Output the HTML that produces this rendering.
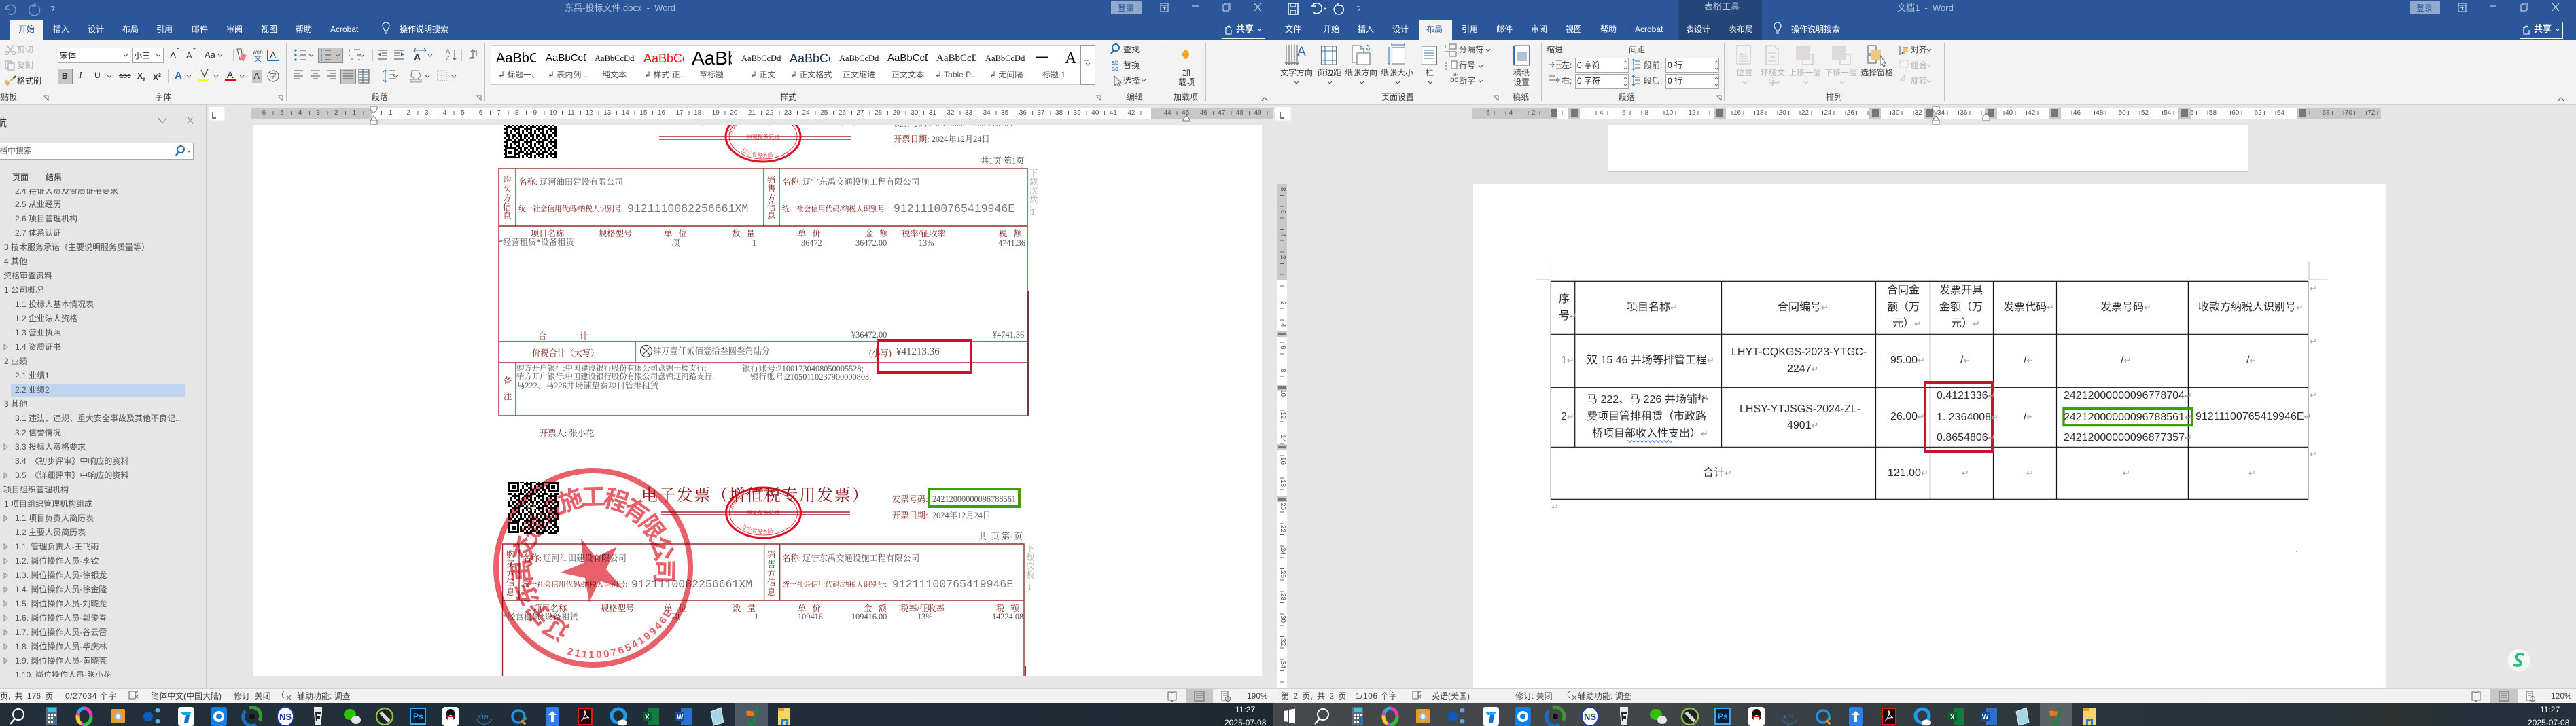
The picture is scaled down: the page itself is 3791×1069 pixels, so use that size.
<!DOCTYPE html>
<html lang="zh"><head><meta charset="utf-8"><title>Word</title>
<style>
html,body{margin:0;padding:0;width:3791px;height:1069px;overflow:hidden;background:#e6e6e6}
body{position:relative;font-family:"Liberation Sans","Noto Sans CJK SC",sans-serif}
p{position:absolute;margin:0;white-space:nowrap;font-size:12px;line-height:14px;color:#444}
i{font-style:normal}
.b{position:absolute}
.tab{top:36px;color:#fff}
.ti{top:5px;color:#b4c3da;font-size:13px}
.gl{top:136px;color:#444}
.gr{color:#b5b5b5}
.st{position:absolute;top:74px;height:24px;line-height:24px;overflow:hidden;white-space:nowrap;color:#111;width:59px}
.sl{top:103px;color:#555}
.rn{position:absolute;top:160px;display:flex;font-size:10px;line-height:14px;color:#555;z-index:3}
.rn span{width:26.6px;text-align:center;flex:none}
.rn.w span{width:33.33px}
.rv{position:absolute;left:1880px;display:flex;flex-direction:column;font-size:10px;line-height:14px;color:#555;z-index:3}
.rv span{height:33.33px;width:14px;writing-mode:vertical-lr;text-align:center;flex:none}
.m{position:absolute;top:159px;height:16px;background:linear-gradient(#777,#777) center/10px 12px no-repeat #c8c8c8;z-index:4}
.mv{position:absolute;left:1880px;width:14px;height:8px;background:linear-gradient(#777,#777) center/12px 4px no-repeat #c8c8c8;z-index:4}
.inp{position:absolute;background:#fff;border:1px solid #a8a8a8;box-sizing:border-box;width:79px;height:22px}
.n p{font-size:12px;color:#555}
.doc{position:absolute;left:0;top:0;width:3791px;height:1069px}
.v p{font-family:"Liberation Serif","Noto Serif CJK SC",serif;font-size:12.3px;color:#555}
.v p.l{color:#7d1f16;font-weight:400}
.v p.u{color:#777;font-size:16.5px;font-family:"Liberation Mono",monospace}
.v p.g{color:#aaa}
.d p{font-size:16px;line-height:20px;color:#2e2e2e}
.d i{color:#a0a0a0;font-size:13px}
.st2 p{font-size:12px;color:#444}
.tb{position:absolute;top:1035px;height:34px}
.ck{color:#fff;font-size:12px}
</style></head><body>

<!-- chrome backgrounds -->
<div class="b" style="left:0;top:0;width:3791px;height:59px;background:#2b579a"></div>
<div class="b" style="left:2469px;top:0;width:124px;height:59px;background:#234578"></div>
<div class="b" style="left:15px;top:29px;width:49px;height:30px;background:#f3f3f3"></div>
<div class="b" style="left:2088px;top:29px;width:49px;height:30px;background:#f3f3f3"></div>
<div class="b" style="left:0;top:59px;width:3791px;height:94px;background:#f3f3f3;border-bottom:2px solid #d2d2d2;box-sizing:content-box"></div>
<div class="b" style="left:1635px;top:2px;width:45px;height:19px;background:#93a9cc"></div>
<div class="b" style="left:3546px;top:2px;width:45px;height:19px;background:#93a9cc"></div>
<div class="b" style="left:1798px;top:32px;width:62px;height:23px;border:1px solid #fff"></div>
<div class="b" style="left:3708px;top:32px;width:62px;height:23px;border:1px solid #fff"></div>

<!-- title text -->
<p class="ti" style="left:831px">东禹-投标文件.docx&nbsp;&nbsp;-&nbsp;&nbsp;Word</p>
<p class="ti" style="left:2508px;top:3px">表格工具</p>
<p class="ti" style="left:2792px">文档1&nbsp;&nbsp;-&nbsp;&nbsp;Word</p>
<p style="left:1645px;top:5px;color:#2b579a">登录</p>
<p style="left:3556px;top:5px;color:#2b579a">登录</p>
<p style="left:1819px;top:36px;color:#fff;font-weight:700;font-size:13px">共享</p>
<p style="left:3729px;top:36px;color:#fff;font-weight:700;font-size:13px">共享</p>

<!-- left tabs -->
<p class="tab" style="left:27px;color:#2b579a">开始</p>
<p class="tab" style="left:78px">插入</p><p class="tab" style="left:129px">设计</p><p class="tab" style="left:180px">布局</p><p class="tab" style="left:230px">引用</p><p class="tab" style="left:282px">邮件</p><p class="tab" style="left:333px">审阅</p><p class="tab" style="left:384px">视图</p><p class="tab" style="left:435px">帮助</p><p class="tab" style="left:486px">Acrobat</p><p class="tab" style="left:588px">操作说明搜索</p>
<!-- right tabs -->
<p class="tab" style="left:1891px">文件</p><p class="tab" style="left:1947px">开始</p><p class="tab" style="left:1998px">插入</p><p class="tab" style="left:2049px">设计</p><p class="tab" style="left:2099px;color:#2b579a">布局</p><p class="tab" style="left:2151px">引用</p><p class="tab" style="left:2202px">邮件</p><p class="tab" style="left:2253px">审阅</p><p class="tab" style="left:2304px">视图</p><p class="tab" style="left:2355px">帮助</p><p class="tab" style="left:2406px">Acrobat</p><p class="tab" style="left:2481px">表设计</p><p class="tab" style="left:2544px">表布局</p><p class="tab" style="left:2636px">操作说明搜索</p>

<!-- left ribbon -->
<p class="gr" style="left:25px;top:66px">剪切</p><p class="gr" style="left:25px;top:89px">复制</p><p style="left:25px;top:112px;color:#333">格式刷</p>
<p class="gl" style="left:-11px">粘贴板</p>
<div class="inp" style="left:85px;top:70px;width:107px;height:23px"></div><p style="left:88px;top:75px;color:#222">宋体</p>
<div class="inp" style="left:194px;top:70px;width:47px;height:23px"></div><p style="left:197px;top:75px;color:#222">小三</p>
<div class="b" style="left:85px;top:101px;width:22px;height:23px;background:#c6c6c6;border:1px solid #8c8c8c;box-sizing:border-box"></div>
<div class="b" style="left:468px;top:70px;width:37px;height:23px;background:#c6c6c6;border:1px solid #8c8c8c;box-sizing:border-box"></div>
<div class="b" style="left:501px;top:101px;width:23px;height:23px;background:#c6c6c6;border:1px solid #8c8c8c;box-sizing:border-box"></div>
<div class="b" style="left:371px;top:103px;width:14px;height:19px;background:#c6c6c6"></div>
<p style="left:91px;top:105px;font-weight:700;color:#333">B</p>
<p style="left:116px;top:105px;font-family:'Liberation Serif',serif;font-style:italic;font-size:14px;color:#333">I</p>
<p style="left:139px;top:104px;text-decoration:underline;color:#333">U</p>
<p style="left:175px;top:105px;text-decoration:line-through;font-size:11px;color:#333">abc</p>
<p style="left:202px;top:105px;font-weight:700;color:#333">X<sub style="font-size:7px">2</sub></p>
<p style="left:225px;top:105px;font-weight:700;color:#333">X<sup style="font-size:7px">2</sup></p>
<p style="left:250px;top:74px;font-size:14px;color:#333">A</p><p style="left:274px;top:75px;font-size:13px;color:#333">A</p>
<p style="left:301px;top:74px;font-size:13px;color:#333">Aa</p>
<p style="left:372px;top:70px;font-size:8px;color:#444">wén</p><p style="left:374px;top:80px;font-size:11px;color:#2b6fb0">文</p>
<p style="left:397px;top:74px;font-size:14px;color:#333">A</p>
<p style="left:257px;top:105px;font-size:15px;color:#2b6fb0;font-weight:700">A</p>
<p style="left:334px;top:103px;font-size:14px;color:#333">A</p>
<p style="left:373px;top:105px;font-size:14px;color:#333">A</p>
<p class="gl" style="left:228px">字体</p><p class="gl" style="left:547px">段落</p><p class="gl" style="left:1148px">样式</p><p class="gl" style="left:1658px">编辑</p><p class="gl" style="left:1727px">加载项</p>

<!-- styles gallery -->
<div class="b" style="left:722px;top:66px;width:890px;height:59px;background:#fff;border:1px solid #d0d0d0;box-sizing:border-box"></div>
<div class="b" style="left:1590px;top:66px;width:22px;height:59px;background:#fff;border:1px solid #9a9a9a;box-sizing:border-box"></div>
<div class="st" style="left:730px;font-size:20px;color:#000">AaBbCc</div>
<div class="st" style="left:803px;font-size:15px;color:#000">AaBbCcD</div>
<div class="st" style="left:875px;font-family:'Liberation Serif',serif;font-size:12.5px">AaBbCcDdE</div>
<div class="st" style="left:947px;font-size:18px;color:#f01010">AaBbCc</div>
<div class="st" style="left:1018px;font-size:28px;color:#000;top:72px;height:28px;line-height:28px">AaBb</div>
<div class="st" style="left:1091px;font-family:'Liberation Serif',serif;font-size:12.5px">AaBbCcDdE</div>
<div class="st" style="left:1162px;font-size:18px;color:#1a2a50">AaBbCc</div>
<div class="st" style="left:1235px;font-family:'Liberation Serif',serif;font-size:12.5px">AaBbCcDdE</div>
<div class="st" style="left:1306px;font-size:15px">AaBbCcD</div>
<div class="st" style="left:1378px;font-family:'Liberation Serif',serif;font-size:15px">AaBbCcD</div>
<div class="st" style="left:1450px;font-family:'Liberation Serif',serif;font-size:12.5px">AaBbCcDdE</div>
<div class="st" style="left:1523px;font-size:20px;width:22px">一</div>
<div class="st" style="left:1567px;font-family:'Liberation Serif',serif;font-size:24px;width:20px">A</div>
<p class="sl" style="left:733px">↲ 标题一、</p><p class="sl" style="left:806px">↲ 表内列...</p><p class="sl" style="left:886px">纯文本</p><p class="sl" style="left:948px">↲ 样式 正...</p><p class="sl" style="left:1029px">章标题</p><p class="sl" style="left:1104px">↲ 正文</p><p class="sl" style="left:1163px">↲ 正文格式</p><p class="sl" style="left:1240px">正文缩进</p><p class="sl" style="left:1312px">正文文本</p><p class="sl" style="left:1376px">↲ Table P...</p><p class="sl" style="left:1456px">↲ 无间隔</p><p class="sl" style="left:1534px">标题 1</p>

<p style="left:1653px;top:66px;color:#333">查找</p><p style="left:1653px;top:89px;color:#333">替换</p><p style="left:1653px;top:112px;color:#333">选择</p>
<p style="left:1740px;top:100px;color:#333">加</p><p style="left:1734px;top:114px;color:#333">载项</p>

<!-- right ribbon text -->
<p style="left:1884px;top:100px">文字方向</p><p style="left:1938px;top:100px">页边距</p><p style="left:1979px;top:100px">纸张方向</p><p style="left:2032px;top:100px">纸张大小</p><p style="left:2098px;top:100px">栏</p>
<p style="left:2147px;top:66px">分隔符</p><p style="left:2147px;top:89px">行号</p><p style="left:2147px;top:112px">断字</p>
<p style="left:2227px;top:100px">稿纸</p><p style="left:2227px;top:114px">设置</p><p class="gl" style="left:2226px">稿纸</p><p class="gl" style="left:2033px">页面设置</p>
<p style="left:2276px;top:66px">缩进</p><p style="left:2397px;top:66px">间距</p>
<p style="left:2298px;top:89px">左:</p><p style="left:2298px;top:112px">右:</p><p style="left:2419px;top:89px">段前:</p><p style="left:2419px;top:112px">段后:</p>
<div class="inp" style="left:2318px;top:85px"></div><div class="inp" style="left:2318px;top:109px"></div><div class="inp" style="left:2451px;top:85px"></div><div class="inp" style="left:2451px;top:109px"></div>
<p style="left:2321px;top:89px;color:#222">0 字符</p><p style="left:2321px;top:112px;color:#222">0 字符</p><p style="left:2454px;top:89px;color:#222">0 行</p><p style="left:2454px;top:112px;color:#222">0 行</p>
<p class="gl" style="left:2382px">段落</p><p class="gl" style="left:2687px">排列</p>
<p class="gr" style="left:2555px;top:100px">位置</p><p class="gr" style="left:2591px;top:100px">环绕文</p><p class="gr" style="left:2603px;top:114px">字</p><p class="gr" style="left:2632px;top:100px">上移一层</p><p class="gr" style="left:2685px;top:100px">下移一层</p><p style="left:2738px;top:100px">选择窗格</p>
<p style="left:2812px;top:66px">对齐</p><p class="gr" style="left:2812px;top:89px">组合</p><p class="gr" style="left:2812px;top:112px">旋转</p>

<!-- rulers -->
<div class="b" style="left:370px;top:159px;width:178px;height:16px;background:#c8c8c8"></div>
<div class="b" style="left:548px;top:159px;width:1146px;height:16px;background:#fff"></div>
<div class="b" style="left:1694px;top:159px;width:180px;height:16px;background:#c8c8c8"></div>
<div class="b" style="left:375px;top:164px;width:1495px;height:6px;background:repeating-linear-gradient(90deg,#666 0 1px,transparent 1px 26.6px);z-index:3"></div>
<div class="rn" style="left:375.1px"><span>6</span><span>5</span><span>4</span><span>3</span><span>2</span><span>1</span><span></span><span>1</span><span>2</span><span>3</span><span>4</span><span>5</span><span>6</span><span>7</span><span>8</span><span>9</span><span>10</span><span>11</span><span>12</span><span>13</span><span>14</span><span>15</span><span>16</span><span>17</span><span>18</span><span>19</span><span>20</span><span>21</span><span>22</span><span>23</span><span>24</span><span>25</span><span>26</span><span>27</span><span>28</span><span>29</span><span>30</span><span>31</span><span>32</span><span>33</span><span>34</span><span>35</span><span>36</span><span>37</span><span>38</span><span>39</span><span>40</span><span>41</span><span>42</span><span></span><span>44</span><span>45</span><span>46</span><span>47</span><span>48</span><span>49</span></div>
<div class="b" style="left:307px;top:157px;width:22px;height:19px;background:#fff;box-shadow:2px 2px 0 #f0f0f0"></div>
<div class="b" style="left:1877px;top:157px;width:22px;height:19px;background:#fff;box-shadow:2px 2px 0 #f0f0f0"></div>

<div class="b" style="left:2167px;top:159px;width:124px;height:16px;background:#c8c8c8"></div>
<div class="b" style="left:2291px;top:159px;width:1089px;height:16px;background:#fff"></div>
<div class="b" style="left:3380px;top:159px;width:124px;height:16px;background:#c8c8c8"></div>
<div class="b" style="left:2182px;top:164px;width:1318px;height:6px;background:repeating-linear-gradient(90deg,#666 0 1px,transparent 1px 16.665px);z-index:3"></div>
<div class="m" style="left:2283px;width:8px"></div><div class="m" style="left:2308px;width:17px"></div><div class="m" style="left:2522px;width:18px"></div><div class="m" style="left:2751px;width:17px"></div><div class="m" style="left:2832px;width:16px"></div><div class="m" style="left:2921px;width:18px"></div><div class="m" style="left:3015px;width:18px"></div><div class="m" style="left:3206px;width:18px"></div><div class="m" style="left:3380px;width:18px"></div>
<div class="rn w" style="left:2173.3px"><span>6</span><span>4</span><span>2</span><span></span><span></span><span>4</span><span>6</span><span>8</span><span>10</span><span>12</span><span></span><span>16</span><span>18</span><span>20</span><span>22</span><span>24</span><span>26</span><span></span><span>30</span><span>32</span><span>34</span><span>36</span><span></span><span>40</span><span>42</span><span></span><span>46</span><span>48</span><span>50</span><span>52</span><span>54</span><span>56</span><span>58</span><span>60</span><span>62</span><span>64</span><span>66</span><span>68</span><span>70</span><span>72</span></div>

<!-- nav pane -->
<div class="b" style="left:0;top:170px;width:24px;height:24px;overflow:hidden"><p style="left:-22px;top:2px;font-size:16px;line-height:20px;color:#333">导航</p></div>
<div class="b" style="left:-2px;top:210px;width:287px;height:25px;background:#fff;border:1px solid #a8a8a8;box-sizing:border-box"></div>
<p style="left:-1px;top:215px;color:#666">档中搜索</p>
<p style="left:18px;top:254px;color:#333">页面</p><p style="left:67px;top:254px;color:#333">结果</p>
<div class="b" style="left:303px;top:153px;width:1px;height:860px;background:#c8c8c8"></div>
<div class="b" style="left:16px;top:565px;width:256px;height:20px;background:#c1d4ef"></div>
<div class="n doc" style="clip-path:inset(279px 3400px 72px 0)">
<p style="left:22px;top:274px">2.4 持证人员及资质证书要求</p>
<p style="left:22px;top:294px">2.5 从业经历</p><p style="left:22px;top:315px">2.6 项目管理机构</p><p style="left:22px;top:336px">2.7 体系认证</p>
<p style="left:6px;top:357px">3 技术服务承诺（主要说明服务质量等）</p><p style="left:6px;top:378px">4 其他</p>
<p style="left:5px;top:399px">资格审查资料</p><p style="left:6px;top:420px">1 公司概况</p>
<p style="left:22px;top:441px">1.1 投标人基本情况表</p><p style="left:22px;top:462px">1.2 企业法人资格</p><p style="left:22px;top:483px">1.3 营业执照</p><p style="left:22px;top:504px">1.4 资质证书</p>
<p style="left:6px;top:525px">2 业绩</p><p style="left:22px;top:546px">2.1 业绩1</p><p style="left:22px;top:567px">2.2 业绩2</p><p style="left:6px;top:588px">3 其他</p>
<p style="left:22px;top:609px">3.1 违法、违规、重大安全事故及其他不良记...</p><p style="left:22px;top:630px">3.2 信誉情况</p><p style="left:22px;top:651px">3.3 投标人资格要求</p>
<p style="left:22px;top:672px">3.4 &nbsp;《初步评审》中响应的资料</p><p style="left:22px;top:693px">3.5 &nbsp;《详细评审》中响应的资料</p>
<p style="left:5px;top:714px">项目组织管理机构</p><p style="left:6px;top:735px">1 项目组织管理机构组成</p>
<p style="left:22px;top:756px">1.1 项目负责人简历表</p><p style="left:22px;top:777px">1.2 主要人员简历表</p>
<p style="left:22px;top:798px">1.1. 管理负责人-王飞雨</p><p style="left:22px;top:819px">1.2. 岗位操作人员-李钦</p><p style="left:22px;top:840px">1.3. 岗位操作人员-徐银龙</p><p style="left:22px;top:861px">1.4. 岗位操作人员-徐金隆</p><p style="left:22px;top:882px">1.5. 岗位操作人员-刘晓龙</p><p style="left:22px;top:903px">1.6. 岗位操作人员-郭俊春</p><p style="left:22px;top:924px">1.7. 岗位操作人员-谷云雷</p><p style="left:22px;top:945px">1.8. 岗位操作人员-毕庆林</p><p style="left:22px;top:966px">1.9. 岗位操作人员-黄晓亮</p><p style="left:22px;top:987px">1.10. 岗位操作人员-张小花</p>
</div>

<!-- left document -->
<div class="doc v" style="clip-path:inset(184px 1934px 73px 372px)">
<div class="b" style="left:372px;top:184px;width:1485px;height:812px;background:#fff"></div>
<div class="b" style="left:1524px;top:688px;width:1px;height:308px;background:#d8d8d8"></div>
<svg class="b" width="3791" height="1069" style="left:0;top:0" fill="none">
<defs><pattern id="q" width="18" height="18" patternUnits="userSpaceOnUse"><path fill="#000" d="M0 0h3v3H0zM6 0h6v3H6zM15 0h3v6h-3zM3 3h3v3H3zM9 3h3v6H9zM0 6h3v6H0zM6 6h3v3H6zM12 6h3v3h-3zM3 9h6v3H3zM15 9h3v3h-3zM0 12h3v3H0zM6 12h3v6H6zM12 12h3v6h-3zM3 15h3v3H3z"/></pattern></defs>
<!-- QR 1 -->
<rect x="742" y="170" width="77" height="62" fill="url(#q)"/>
<rect x="743" y="217" width="16" height="15" fill="#fff"/><rect x="744.5" y="218.5" width="13" height="12" stroke="#000" stroke-width="3"/><rect x="748" y="222" width="6" height="5" fill="#000"/>
<!-- invoice 1 lines -->
<g stroke="#9e2a2b" stroke-width="1.4">
<rect x="734" y="248" width="778" height="364"/>
<path d="M734 333H1512M734 503H1512M734 534H1512M759 248V333M1124 248V333M1147 248V333M935 503V534M759 534V612"/>
</g>
<path d="M1513.5 428V612" stroke="#5c4444" stroke-width="2"/>
<path d="M970 201H1253M970 205H1253" stroke="#9e2a2b" stroke-width="1.5"/>
<ellipse cx="1123" cy="201" rx="55" ry="37" stroke="#e01020" stroke-width="3"/><ellipse cx="1123" cy="201" rx="50" ry="33" stroke="#e01020" stroke-width=".8"/>
<circle cx="951" cy="517" r="8.5" stroke="#333" stroke-width="1.2"/><path d="M945 511l12 12M957 511l-12 12" stroke="#333"/>
<rect x="1292" y="501" width="137" height="48" stroke="#d0102a" stroke-width="4"/>
<!-- QR 2 -->
<rect x="748" y="709" width="75" height="77" fill="url(#q)"/>
<g fill="#fff"><rect x="748" y="709" width="17" height="17"/><rect x="806" y="709" width="17" height="17"/><rect x="748" y="769" width="17" height="17"/></g>
<g stroke="#000" stroke-width="3"><rect x="749.5" y="710.5" width="13" height="13"/><rect x="807.5" y="710.5" width="13" height="13"/><rect x="749.5" y="770.5" width="13" height="13"/></g>
<g fill="#000"><rect x="753" y="714" width="6" height="6"/><rect x="811" y="714" width="6" height="6"/><rect x="753" y="774" width="6" height="6"/></g>
<!-- invoice 2 lines -->
<g stroke="#9e2a2b" stroke-width="1.4"><path d="M739.5 1000V801H1507V1000M739.5 884H1507M764 801V884M1124.6 801V884M1147.6 801V884"/></g>
<path d="M1509 980V996" stroke="#5c4444" stroke-width="2"/>
<path d="M973 754H1251M973 758H1251" stroke="#9e2a2b" stroke-width="1.5"/>
<ellipse cx="1123.5" cy="755" rx="55" ry="37" stroke="#e01020" stroke-width="3"/><ellipse cx="1123.5" cy="755" rx="50" ry="33" stroke="#e01020" stroke-width=".8"/>
<rect x="1367" y="720" width="133" height="26" stroke="#3f9b0f" stroke-width="4"/>
</svg>
<!-- invoice 1 text -->
<p style="left:1315px;top:175px" class="l">发票号码:<span style="color:#555;font-weight:400">24212000000096778704</span></p>
<p style="left:945px;top:162px;font-size:24px;line-height:26px;letter-spacing:1.8px;color:#8b1a1a">电子发票（增值税专用发票）</p>
<p style="left:1315px;top:198px" class="l">开票日期:<span style="color:#555;font-weight:400"> 2024年12月24日</span></p>
<p style="left:1443px;top:230px;color:#444">共1页 第1页</p>
<p class="l" style="left:740px;top:258px">购</p><p class="l" style="left:740px;top:271px">买</p><p class="l" style="left:740px;top:285px">方</p><p class="l" style="left:740px;top:298px">信</p><p class="l" style="left:740px;top:311px">息</p>
<p class="l" style="left:1129px;top:258px">销</p><p class="l" style="left:1129px;top:271px">售</p><p class="l" style="left:1129px;top:285px">方</p><p class="l" style="left:1129px;top:298px">信</p><p class="l" style="left:1129px;top:311px">息</p>
<p class="l" style="left:763px;top:261px">名称:</p><p style="left:794px;top:261px">辽河油田建设有限公司</p>
<p class="l" style="left:763px;top:302px;font-size:10.6px">统一社会信用代码/纳税人识别号:</p><p class="u" style="left:923px;top:301px">9121110082256661XM</p>
<p class="l" style="left:1151px;top:261px">名称:</p><p style="left:1181px;top:261px">辽宁东禹交通设施工程有限公司</p>
<p class="l" style="left:1151px;top:302px;font-size:10.6px">统一社会信用代码/纳税人识别号:</p><p class="u" style="left:1315px;top:301px">91211100765419946E</p>
<p class="l" style="left:781px;top:337px">项目名称</p><p class="l" style="left:881px;top:337px">规格型号</p><p class="l" style="left:977px;top:337px">单&nbsp;&nbsp;&nbsp;位</p><p class="l" style="left:1077px;top:337px">数&nbsp;&nbsp;&nbsp;量</p><p class="l" style="left:1174px;top:337px">单&nbsp;&nbsp;&nbsp;价</p><p class="l" style="left:1273px;top:337px">金&nbsp;&nbsp;&nbsp;额</p><p class="l" style="left:1327px;top:337px">税率/征收率</p><p class="l" style="left:1470px;top:337px">税&nbsp;&nbsp;&nbsp;额</p>
<p style="left:734px;top:350px">*经营租赁*设备租赁</p><p style="left:988px;top:351px">项</p><p style="left:1107px;top:351px">1</p><p style="left:1179px;top:351px">36472</p><p style="left:1259px;top:351px">36472.00</p><p style="left:1352px;top:351px">13%</p><p style="left:1469px;top:351px">4741.36</p>
<p class="l" style="left:792px;top:488px">合</p><p class="l" style="left:853px;top:488px">计</p><p style="left:1253px;top:486px">¥36472.00</p><p style="left:1461px;top:486px">¥4741.36</p>
<p class="l" style="left:783px;top:513px">价税合计（大写）</p><p style="left:961px;top:510px">肆万壹仟贰佰壹拾叁圆叁角陆分</p><p class="l" style="left:1279px;top:513px">(小写)</p><p style="left:1319px;top:511px;font-size:15px">¥41213.36</p>
<p class="l" style="left:741px;top:554px">备</p><p class="l" style="left:741px;top:577px">注</p>
<p style="left:760px;top:536px;font-size:11.4px">购方开户银行:中国建设银行股份有限公司盘锦于楼支行;</p><p style="left:1092px;top:536px">银行账号:21001730408050005528;</p>
<p style="left:760px;top:548px;font-size:11.4px">销方开户银行:中国建设银行股份有限公司盘锦辽河路支行;</p><p style="left:1104px;top:548px">银行账号:21050110237900000803;</p>
<p style="left:760px;top:561px">马222、马226井场铺垫费项目管排租赁</p>
<p class="l" style="left:794px;top:631px">开票人: <span style="color:#555">张小花</span></p>
<p class="g" style="left:1515px;top:248px">下</p><p class="g" style="left:1515px;top:261px">载</p><p class="g" style="left:1515px;top:274px">次</p><p class="g" style="left:1515px;top:287px">数</p><p class="g" style="left:1515px;top:299px">:</p><p class="g" style="left:1517px;top:305px">1</p>
<!-- invoice 2 text -->
<p style="left:944px;top:717px;font-size:24px;line-height:26px;letter-spacing:1.8px;color:#8b1a1a">电子发票（增值税专用发票）</p>
<p class="l" style="left:1313px;top:728px">发票号码:</p><p style="left:1372px;top:728px">24212000000096788561</p>
<p class="l" style="left:1313px;top:752px">开票日期:</p><p style="left:1372px;top:752px">2024年12月24日</p>
<p style="left:1440px;top:783px;color:#444">共1页 第1页</p>
<p class="l" style="left:745px;top:810px">购</p><p class="l" style="left:745px;top:824px">买</p><p class="l" style="left:745px;top:838px">方</p><p class="l" style="left:745px;top:851px">信</p><p class="l" style="left:745px;top:865px">息</p>
<p class="l" style="left:1129px;top:810px">销</p><p class="l" style="left:1129px;top:824px">售</p><p class="l" style="left:1129px;top:838px">方</p><p class="l" style="left:1129px;top:851px">信</p><p class="l" style="left:1129px;top:865px">息</p>
<p class="l" style="left:769px;top:815px">名称:</p><p style="left:799px;top:815px">辽河油田建设有限公司</p>
<p class="l" style="left:769px;top:855px;font-size:10.6px">统一社会信用代码/纳税人识别号:</p><p class="u" style="left:929px;top:854px">9121110082256661XM</p>
<p class="l" style="left:1151px;top:815px">名称:</p><p style="left:1181px;top:815px">辽宁东禹交通设施工程有限公司</p>
<p class="l" style="left:1151px;top:855px;font-size:10.6px">统一社会信用代码/纳税人识别号:</p><p class="u" style="left:1313px;top:854px">91211100765419946E</p>
<p class="l" style="left:785px;top:889px">项目名称</p><p class="l" style="left:884px;top:889px">规格型号</p><p class="l" style="left:977px;top:889px">单&nbsp;&nbsp;&nbsp;位</p><p class="l" style="left:1078px;top:889px">数&nbsp;&nbsp;&nbsp;量</p><p class="l" style="left:1174px;top:889px">单&nbsp;&nbsp;&nbsp;价</p><p class="l" style="left:1271px;top:889px">金&nbsp;&nbsp;&nbsp;额</p><p class="l" style="left:1325px;top:889px">税率/征收率</p><p class="l" style="left:1466px;top:889px">税&nbsp;&nbsp;&nbsp;额</p>
<p style="left:740px;top:901px">*经营租赁*设备租赁</p><p style="left:988px;top:901px">项</p><p style="left:1110px;top:901px">1</p><p style="left:1174px;top:901px">109416</p><p style="left:1253px;top:901px">109416.00</p><p style="left:1350px;top:901px">13%</p><p style="left:1460px;top:901px">14224.08</p>
<p class="g" style="left:1510px;top:801px">下</p><p class="g" style="left:1510px;top:814px">载</p><p class="g" style="left:1510px;top:827px">次</p><p class="g" style="left:1510px;top:840px">数</p><p class="g" style="left:1510px;top:853px">:</p><p class="g" style="left:1512px;top:858px">1</p>
<p style="left:775px;top:740px;color:#f0e4b0;font-size:13px">税</p>
<!-- stamp text & big stamp -->
<svg class="b" width="3791" height="1069" style="left:0;top:0;mix-blend-mode:multiply" fill="none">
<path id="s1a" d="M1077 752A47 32 0 0 1 1170 752"/><path id="s1b" d="M1085 772A47 32 0 0 0 1162 772"/>
<path id="s0a" d="M1077 198A47 32 0 0 1 1170 198"/><path id="s0b" d="M1085 218A47 32 0 0 0 1162 218"/>
<g font-family="'Noto Serif CJK SC',serif" font-size="8" fill="#e02030">
<text><textPath href="#s1a">全国统一发票监制章</textPath></text><text x="1099" y="758">国家税务总局</text><text><textPath href="#s1b" startOffset="8">辽宁省税务局</textPath></text>
<text><textPath href="#s0a">全国统一发票监制章</textPath></text><text x="1099" y="204">国家税务总局</text><text><textPath href="#s0b" startOffset="8">辽宁省税务局</textPath></text>
</g>
<circle cx="873" cy="836" r="143" stroke="#e8606a" stroke-width="8"/>
<polygon points="855,793 877,821 908,805 892,838 917,867 882,855 867,887 861,851 825,843 859,829" fill="#e8606a"/>
<path id="s2" d="M840 922A92 92 0 1 1 948.4 888.8"/><path id="s3" d="M834 963A133 133 0 0 0 990 900"/>
<text font-family="'Noto Sans CJK SC',sans-serif" font-size="36" font-weight="700" fill="#e8606a" letter-spacing="-6.3"><textPath href="#s2">辽宁东禹交通设施工程有限公司</textPath></text>
<text font-family="'Liberation Sans',sans-serif" font-size="15" font-weight="700" fill="#e8606a"><textPath href="#s3" textLength="180" lengthAdjust="spacing">211100765419946E</textPath></text>
</svg>
</div>

<!-- right doc -->
<div class="b" style="left:2366px;top:184px;width:943px;height:68px;background:#fff;border-bottom:1px solid #c4c4c4"></div>
<div class="b" style="left:2168px;top:271px;width:1343px;height:742px;background:#fff"></div>
<!-- vertical ruler -->
<div class="b" style="left:1880px;top:271px;width:14px;height:142px;background:#c8c8c8"></div>
<div class="b" style="left:1880px;top:413px;width:14px;height:600px;background:#fff"></div>
<div class="b" style="left:1884px;top:287px;width:6px;height:726px;background:repeating-linear-gradient(180deg,#666 0 1px,transparent 1px 16.665px);z-index:3"></div>
<div class="rv" style="top:262px"><span>8</span><span>6</span><span>4</span><span>2</span><span></span><span>2</span><span>4</span><span>6</span><span>8</span><span>10</span><span>12</span><span>14</span><span>16</span><span>18</span><span>20</span><span>22</span><span>24</span><span>26</span><span>28</span><span>30</span><span>32</span><span>34</span></div>
<div class="mv" style="top:488px"></div><div class="mv" style="top:567px"></div><div class="mv" style="top:654px"></div><div class="mv" style="top:731px"></div>
<div class="doc d">
<svg class="b" width="3791" height="1069" style="left:0;top:0" fill="none">
<g stroke="#111" stroke-width="1.2">
<rect x="2282.4" y="414.3" width="1114.3" height="321"/>
<path d="M2282 492.3H3397M2282 570.7H3397M2282 658.3H3397M2317.7 414V658M2533.5 414V658M2760.5 414V735M2840.5 414V735M2933.5 414V735M3026.5 414V735M3220.4 414V735"/>
</g>
<path d="M2282.4 385V412H2260M3398 385V412H3426" stroke="#bdbdbd"/>
<rect x="2833" y="563" width="99" height="102" stroke="#d0102a" stroke-width="4"/>
<rect x="3037" y="601.5" width="189" height="25" stroke="#3f9b0f" stroke-width="3.4"/>
<path d="M2394 650q1.5-2.500 3 0t3 0 3 0 3 0 3 0 3 0 3 0 3 0 3 0 3 0 3 0 3 0 3 0 3 0 3 0 3 0 3 0 3 0 3 0 3 0 3 0 3 0" stroke="#3a6fd8" stroke-width=".9"/>
</svg>
<p style="left:2294px;top:431px">序</p><p style="left:2294px;top:456px">号<i>↵</i></p>
<p style="left:2394px;top:443px">项目名称<i>↵</i></p><p style="left:2616px;top:443px">合同编号<i>↵</i></p>
<p style="left:2777px;top:418px">合同金</p><p style="left:2777px;top:443px">额（万</p><p style="left:2785px;top:467px">元）<i>↵</i></p>
<p style="left:2854px;top:418px">发票开具</p><p style="left:2854px;top:443px">金额（万</p><p style="left:2871px;top:467px">元）<i>↵</i></p>
<p style="left:2948px;top:443px">发票代码<i>↵</i></p><p style="left:3091px;top:443px">发票号码<i>↵</i></p><p style="left:3235px;top:443px">收款方纳税人识别号<i>↵</i></p>
<p style="left:2297px;top:521px">1<i>↵</i></p><p style="left:2335px;top:521px">双 15 46 井场等排管工程<i>↵</i></p><p style="left:2548px;top:509px">LHYT-CQKGS-2023-YTGC-</p><p style="left:2630px;top:534px">2247<i>↵</i></p><p style="left:2782px;top:521px">95.00<i>↵</i></p>
<p style="left:2885px;top:521px">/<i>↵</i></p><p style="left:2978px;top:521px">/<i>↵</i></p><p style="left:3121px;top:521px">/<i>↵</i></p><p style="left:3306px;top:521px">/<i>↵</i></p>
<p style="left:2297px;top:604px">2<i>↵</i></p><p style="left:2335px;top:579px">马 222、马 226 井场铺垫</p><p style="left:2335px;top:604px">费项目管排租赁（市政路</p><p style="left:2343px;top:629px">桥项目部收入性支出）<i>↵</i></p>
<p style="left:2560px;top:593px">LHSY-YTJSGS-2024-ZL-</p><p style="left:2630px;top:617px">4901<i>↵</i></p><p style="left:2782px;top:604px">26.00<i>↵</i></p>
<p style="left:2850px;top:573px">0.4121336<i>↵</i></p><p style="left:2850px;top:605px">1. 2364008<i>↵</i></p><p style="left:2850px;top:635px">0.8654806<i>↵</i></p>
<p style="left:2978px;top:604px">/<i>↵</i></p>
<p style="left:3037px;top:573px">24212000000096778704<i>↵</i></p><p style="left:3037px;top:605px">24212000000096788561<i>↵</i></p><p style="left:3037px;top:635px">24212000000096877357<i>↵</i></p>
<p style="left:3231px;top:604px">91211100765419946E<i>↵</i></p>
<p style="left:2506px;top:687px">合计<i>↵</i></p><p style="left:2778px;top:687px">121.00<i>↵</i></p>
<p style="left:2887px;top:687px"><i>↵</i></p><p style="left:2982px;top:687px"><i>↵</i></p><p style="left:3124px;top:687px"><i>↵</i></p><p style="left:3309px;top:687px"><i>↵</i></p>
<p style="left:3399px;top:415px"><i>↵</i></p><p style="left:3399px;top:493px"><i>↵</i></p><p style="left:3399px;top:572px"><i>↵</i></p><p style="left:3399px;top:659px"><i>↵</i></p><p style="left:2283px;top:737px"><i>↵</i></p>
</div>

<!-- status bars -->
<div class="b" style="left:0;top:1013px;width:3791px;height:22px;background:#f2f2f2;border-top:2px solid #cfcfcf;box-sizing:border-box"></div>
<div class="b" style="left:1745px;top:1015px;width:40px;height:20px;background:#c6c6c6"></div>
<div class="b" style="left:3665px;top:1015px;width:40px;height:20px;background:#c6c6c6"></div>
<div class="st2">
<p style="left:0;top:1018px;word-spacing:3px">页, 共 176 页</p><p style="left:96px;top:1018px;letter-spacing:.5px">0/27034 个字</p><p style="left:222px;top:1018px">简体中文(中国大陆)</p><p style="left:344px;top:1018px">修订: 关闭</p><p style="left:437px;top:1018px">辅助功能: 调查</p><p style="left:1835px;top:1018px">190%</p>
<p style="left:1885px;top:1018px;word-spacing:3px">第 2 页, 共 2 页</p><p style="left:1995px;top:1018px;letter-spacing:.5px">1/106 个字</p><p style="left:2107px;top:1018px">英语(美国)</p><p style="left:2230px;top:1018px">修订: 关闭</p><p style="left:2322px;top:1018px">辅助功能: 调查</p><p style="left:3754px;top:1018px">120%</p>
</div>

<!-- taskbars -->
<div class="tb" style="left:0;width:1873px;background:linear-gradient(90deg,#212f38,#1f2e37 70%,#1c2a31)"></div>
<div class="tb" style="left:1873px;width:1918px;background:linear-gradient(90deg,#46494c,#414547 30%,#2c363c 60%,#26323a 80%,#2d3130 86%,#22313a 92%,#22313a)"></div>
<div class="b" style="left:1082px;top:1035px;width:48px;height:34px;background:#4c5a63"></div>
<div class="b" style="left:3002px;top:1035px;width:48px;height:34px;background:#5c6266"></div>
<p class="ck" style="left:1818px;top:1038px">11:27</p><p class="ck" style="left:1802px;top:1057px">2025-07-08</p>
<p class="ck" style="left:3738px;top:1038px">11:27</p><p class="ck" style="left:3720px;top:1057px">2025-07-08</p>

<!-- icons overlay -->
<svg class="b" width="3791" height="1069" style="left:0;top:0;z-index:5" fill="none">
<defs>
<g id="tS"><circle cx="2" cy="-3" r="8" stroke="#fff" stroke-width="2"/><path d="M-3 3L-10 11" stroke="#fff" stroke-width="2.400"/></g>
<g id="tC"><rect x="-8" y="-14" width="16" height="27" rx="1" fill="#5b6b78"/><rect x="-6" y="-12" width="12" height="6" fill="#3cc0f2"/><path d="M-6-4h3v3h-3zM-1-4h3v3h-3zM4-4h2v3H4zM-6 1h3v3h-3zM-1 1h3v3h-3zM-6 6h3v4h-3zM-1 6h3v4h-3z" fill="#fff"/><rect x="4" y="1" width="2" height="9" fill="#1a70c0"/></g>
<g id="tR"><ellipse rx="10" ry="12" stroke="#e040c0" stroke-width="5"/><ellipse rx="10" ry="12" stroke="#30c040" stroke-width="5" stroke-dasharray="18 52"/><ellipse rx="10" ry="12" stroke="#f8d020" stroke-width="5" stroke-dasharray="14 56" stroke-dashoffset="-22"/><ellipse rx="10" ry="12" stroke="#20b0e0" stroke-width="5" stroke-dasharray="12 58" stroke-dashoffset="30"/></g>
<g id="tM"><rect x="-10" y="-11" width="20" height="21" rx="2" fill="#ef9a22"/><circle r="6" fill="#9ab8d0"/><circle r="3" fill="#fff"/></g>
<g id="tD"><circle cx="-6" r="7" fill="#0a5cc0"/><circle cx="8" cy="-9" r="3.500" fill="#5aa8e0"/><circle cx="8" cy="7" r="3.500" fill="#5aa8e0"/></g>
<g id="tT"><rect x="-12" y="-14" width="24" height="28" rx="4" fill="#fff"/><path d="M-8-7H8L5-2H-5z" fill="#16a8e8"/><path d="M-1-2H5L3 9H-3z" fill="#0d6fe0"/></g>
<g id="tO"><rect x="-12" y="-14" width="24" height="28" rx="4" fill="#0f7ee8"/><circle r="6" stroke="#fff" stroke-width="4"/></g>
<g id="tW"><circle r="4" fill="#111"/><path d="M-4-13A13 13 0 0 1 11 6" stroke="#3a9a2a" stroke-width="5"/><path d="M6 12A13 13 0 0 1-10-8" stroke="#1a6fc0" stroke-width="5"/></g>
<g id="tN"><ellipse rx="12" ry="14" fill="#fff" stroke="#1a3fa0" stroke-width="2"/><text x="-9" y="5" font-family="Liberation Sans" font-size="13" font-weight="700" fill="#1a3fa0">NS</text></g>
<g id="tF"><path d="M-6-14H6V-4L4 12H-4L-6-4z" fill="#e8e8e8"/><path d="M-4-6H4V-3H-1V0H3V3H-1V7H-3z" fill="#222"/></g>
<g id="tX"><ellipse cx="-3" cy="-3" rx="9" ry="8" fill="#2dc100"/><ellipse cx="6" cy="5" rx="7" ry="6" fill="#e6e6e6"/></g>
<g id="tP"><circle r="12" fill="#222" stroke="#8bc34a" stroke-width="2.400"/><path d="M-6-6L7 7" stroke="#d8d8d8" stroke-width="5"/></g>
<g id="tA"><rect x="-11" y="-12" width="22" height="23" fill="#001d34" stroke="#31a8ff" stroke-width="2"/><text x="-7" y="4" font-family="Liberation Sans" font-size="12" font-weight="700" fill="#31a8ff">Ps</text></g>
<g id="tQ"><rect x="-12" y="-14" width="24" height="28" rx="4" fill="#fff"/><ellipse cy="-2" rx="7" ry="9" fill="#111"/><ellipse cy="3" rx="4.500" ry="5" fill="#fff"/><rect x="-6" y="-1" width="12" height="2" fill="#e02020"/></g>
<g id="tI"><text x="-10" y="4" font-family="Liberation Serif" font-style="italic" font-size="13" fill="#2f78b8">xin</text><path d="M-11 4A12 12 0 0 0 11 4" stroke="#2f78b8"/></g>
<g id="tB"><circle r="9" stroke="#1f8fe8" stroke-width="3.400"/><circle cx="6" cy="7" r="2.400" fill="#e8802a"/><circle cx="10" cy="3" r="2" fill="#38b040"/><circle cx="9" cy="10" r="1.800" fill="#e8c020"/></g>
<g id="tU"><rect x="-10" y="-14" width="20" height="28" rx="3" fill="#2b80ee"/><path d="M0-8L6-2H2V8H-2V-2H-6z" fill="#fff"/></g>
<g id="tJ"><rect x="-10" y="-12" width="20" height="24" fill="#1a0505" stroke="#e01b0b" stroke-width="2"/><path d="M-6 7C-2 3 2-6 0-8S-1-2 6 2C2 1-3 2-6 7z" stroke="#e8d8d8" stroke-width="1.200"/></g>
<g id="tV"><circle cy="-1" r="10" stroke="#1a9cf0" stroke-width="5"/><ellipse cx="6" cy="9" rx="7" ry="4.500" fill="#fff"/></g>
<g id="tE"><rect x="-4" y="-13" width="16" height="26" fill="#107c41"/><rect x="-12" y="-7" width="13" height="14" fill="#0b5c30"/><text x="-9" y="4" font-family="Liberation Sans" font-size="10" font-weight="700" fill="#fff">X</text></g>
<g id="tL"><rect x="-4" y="-13" width="16" height="26" fill="#2b70d0"/><rect x="-12" y="-7" width="13" height="14" fill="#154a9a"/><text x="-10" y="4" font-family="Liberation Sans" font-size="10" font-weight="700" fill="#fff">W</text></g>
<g id="tG"><polygon points="-9,-7 6,-13 10,9 -5,13" fill="#a6d6e6" stroke="#e4f0f4"/></g>
<g id="tY"><path d="M-9-8C-4-10 0-6 3-8L2-1C-2 1-5-3-8 0z" fill="#e2791f"/><path d="M8-13C2-4 6 8 0 12-3 13-5 10-5 7" stroke="#178a3c" stroke-width="3"/></g>
<g id="tK"><rect x="-9" y="-12" width="18" height="24" fill="#f8d568"/><rect x="-9" y="-12" width="9" height="4" fill="#e8a020"/><path d="M-5 12V3H5V12H2V6H-2V12z" fill="#1a80d8"/></g>
</defs>
<!-- taskbar left -->
<use href="#tS" x="25" y="1055"/><use href="#tC" x="76" y="1055"/><use href="#tR" x="124" y="1055"/><use href="#tM" x="174" y="1055"/><use href="#tD" x="224" y="1055"/><use href="#tT" x="274" y="1055"/><use href="#tO" x="322" y="1055"/><use href="#tW" x="371" y="1055"/><use href="#tN" x="420" y="1055"/><use href="#tF" x="468" y="1055"/><use href="#tX" x="518" y="1055"/><use href="#tP" x="566" y="1055"/><use href="#tA" x="615" y="1055"/><use href="#tQ" x="663" y="1055"/><use href="#tI" x="713" y="1055"/><use href="#tB" x="763" y="1055"/><use href="#tU" x="813" y="1055"/><use href="#tJ" x="861" y="1055"/><use href="#tV" x="910" y="1055"/><use href="#tE" x="958" y="1055"/><use href="#tL" x="1006" y="1055"/><use href="#tG" x="1055" y="1055"/><use href="#tY" x="1107" y="1055"/><use href="#tK" x="1154" y="1055"/>
<!-- taskbar right -->
<path d="M1889 1047l7-1v8h-7zM1897 1045l9-1.500V1054h-9zM1889 1055h7v8l-7-1zM1897 1055h9v10.500l-9-1.500z" fill="#fff"/>
<use href="#tS" x="1945" y="1055"/><use href="#tC" x="1998" y="1055"/><use href="#tR" x="2046" y="1055"/><use href="#tM" x="2094" y="1055"/><use href="#tD" x="2144" y="1055"/><use href="#tT" x="2194" y="1055"/><use href="#tO" x="2241" y="1055"/><use href="#tW" x="2289" y="1055"/><use href="#tN" x="2340" y="1055"/><use href="#tF" x="2390" y="1055"/><use href="#tX" x="2440" y="1055"/><use href="#tP" x="2487" y="1055"/><use href="#tA" x="2535" y="1055"/><use href="#tQ" x="2585" y="1055"/><use href="#tI" x="2634" y="1055"/><use href="#tB" x="2683" y="1055"/><use href="#tU" x="2731" y="1055"/><use href="#tJ" x="2780" y="1055"/><use href="#tV" x="2829" y="1055"/><use href="#tE" x="2879" y="1055"/><use href="#tL" x="2927" y="1055"/><use href="#tG" x="2976" y="1055"/><use href="#tY" x="3025" y="1055"/><use href="#tK" x="3075" y="1055"/>

<!-- floating logo -->
<circle cx="3707" cy="972" r="17" fill="#f4fbf7" stroke="#e4e4e4"/><path d="M3714 964C3704 960 3699 968 3706 972S3710 982 3699 979" stroke="#35b884" stroke-width="4"/>
<circle cx="3380" cy="812" r="1" fill="#999"/>

<!-- title icons -->
<g stroke="#7f9cc8" stroke-width="1.500">
<path d="M9 14A7 7 0 1 1 12 20M9 9v5h5"/><path d="M52 7A8 8 0 1 0 56 9M52 4v5h-5"/><path d="M77 10l2 3 2-3" stroke-width="1"/>
</g>
<g stroke="#fff" stroke-width="1.500">
<rect x="1896" y="5" width="14" height="16"/><path d="M1899 5v5h8V5M1899 21v-6h8v6" stroke-width="1.200"/>
<path d="M1936 9h-5l3-4M1931 9a7.500 7.500 0 1 1 1 8"/><path d="M1948 11l2 2 2-2" stroke-width="1"/>
<path d="M1974 8a7 7 0 1 1-5-1M1969 4v4h4"/>
<path d="M1997 10h5M1998 13l1.500 2 1.500-2" stroke-width="1"/>
</g>
<g stroke="#fff" stroke-width="1" >
<path d="M75 10h5M76 13l1.500 2 1.500-2"/>
</g>
<g stroke="#c8d4e6" stroke-width="1.100">
<rect x="1708" y="5" width="11" height="12"/><path d="M1708 8h11M1713.500 15v-5M1711.500 12l2-2 2 2"/><path d="M1754 9h10"/><rect x="1800" y="7" width="8" height="9"/><path d="M1802 7V5h8v9h-2"/><path d="M1846 5l10 11M1856 5l-10 11"/>
<rect x="3618" y="5" width="11" height="12"/><path d="M3618 8h11M3623.500 15v-5M3621.500 12l2-2 2 2"/><path d="M3664 9h10"/><rect x="3710" y="7" width="8" height="9"/><path d="M3712 7V5h8v9h-2"/><path d="M3756 5l10 11M3766 5l-10 11"/>
</g>
<!-- share glyphs -->
<g stroke="#fff" stroke-width="1.100"><path d="M1804 40v10h8v-6M1804 42l4-4 3 3M1807 40l3-2"/><path d="M1852 43l2 2 2-2"/><path d="M3714 40v10h8v-6M3714 42l4-4 3 3M3717 40l3-2"/><path d="M3762 43l2 2 2-2"/>
<path d="M564 41a5 5 0 1 1 8 0c-1 1-2 2-2 4h-4c0-2-1-3-2-4zM566 47h4M566 49h4"/><path d="M2612 41a5 5 0 1 1 8 0c-1 1-2 2-2 4h-4c0-2-1-3-2-4zM2614 47h4M2614 49h4"/></g>

<!-- group separators -->
<path stroke="#c4c4c4" d="M76.500 63V149M421.500 63V149M713.500 63V149M1624.500 63V149M1717.500 63V149M1774.500 63V149M2210.500 63V149M2268.500 63V149M2537.500 63V149M2861.500 63V149M247.500 102V122M343.500 72V90M548.500 72V90M603.500 72V90M647.500 72V90M679.500 72V90M550.500 102V122M597.500 102V122"/>
<!-- dialog launchers -->
<path stroke="#777" d="M64 141h7v7M65 142l5 5M409 141h7v7M410 142l5 5M701 141h7v7M702 142l5 5M1613 141h7v7M1614 142l5 5M2198 141h7v7M2199 142l5 5M2526 141h7v7M2527 142l5 5"/>
<!-- chevrons -->
<path stroke="#555" d="M182 80l3 3 3-3M230 80l3 3 3-3M321 80l3 3 3-3M455 80l3 3 3-3M494 80l3 3 3-3M530 80l3 3 3-3M630 80l3 3 3-3M158 111l3 3 3-3M275 111l3 3 3-3M315 111l3 3 3-3M353 111l3 3 3-3M579 111l3 3 3-3M626 111l3 3 3-3M665 111l3 3 3-3M1668 72l3 3 3-3M1680 117l3 3 3-3M1598 93l3 3 3-3M1905 120l3 3 3-3M1954 120l3 3 3-3M2001 120l3 3 3-3M2054 120l3 3 3-3M2102 120l3 3 3-3M2187 72l3 3 3-3M2176 96l3 3 3-3M2176 118l3 3 3-3M2836 72l3 3 3-3"/>
<path stroke="#c4c4c4" d="M2565 120l3 3 3-3M2613 120l3 3 3-3M2655 120l3 3 3-3M2708 120l3 3 3-3M2836 95l3 3 3-3M2836 118l3 3 3-3"/>
<path stroke="#555" d="M1857 148l4-4 4 4M3765 148l4-4 4 4"/>
<path stroke="#888" d="M233 174l6 7 6-7M276 172l8 10M284 172l-8 10"/>
<path stroke="#777" d="M313 165v9h5M1884 165v9h5" stroke-width="2"/>
<!-- A sizes -->
<path fill="#2b6fb0" d="M260 72l2-2 2 2zM284 71l4 0-2 2z"/>
<!-- clipboard icons -->
<g stroke="#b8b8b8" stroke-width="1.400"><path d="M10 66l8 12M20 66l-8 12"/><circle cx="10" cy="78" r="2.400"/><circle cx="20" cy="78" r="2.400"/><rect x="8" y="90" width="8" height="10"/><rect x="12" y="93" width="9" height="10" fill="#f3f3f3"/></g>
<path d="M9 117l6 5-4 5-4-5zM14 118l7-6 2 2-6 6z" fill="#e5b569"/><path d="M19 114l4-3 1 2-3 3z" fill="#555"/>
<!-- eraser, highlight, colour bars, char circle -->
<path d="M349 72l6 0 2 14-4 2z" fill="none" stroke="#555"/><rect x="354" y="79" width="7" height="10" transform="rotate(25 357 84)" fill="#f07a8a"/>
<rect x="393.500" y="73.500" width="17" height="16" stroke="#2b6fb0" />
<path d="M296 103l5 10M306 102l-6 12" stroke="#555" stroke-width="1.400"/><rect x="292" y="116" width="16" height="4" fill="#ff0"/>
<rect x="331" y="116" width="16" height="4" fill="#f00000"/>
<circle cx="402" cy="112" r="8" stroke="#555"/><text x="397" y="116" font-family="Noto Sans CJK SC" font-size="10" fill="#555">字</text>
<!-- para icons -->
<g stroke="#6e6e6e" stroke-width="1.200">
<path d="M441 74h9M441 81h9M441 88h9M478 74h9M478 81h9M478 88h9M521 73h9M525 81h5M527 88h3"/>
<path d="M556 74h14M562 78h8M562 82h8M556 87h14M580 74h14M580 78h8M580 82h8M580 87h14"/>
<path d="M432 104h14M432 108h9M432 112h14M432 116h9M457 104h14M460 108h8M457 112h14M460 116h8M481 104h14M486 108h9M481 112h14M486 116h9M505 104h15M505 108h15M505 112h15M505 116h15M529 106h14M529 110h14M529 114h14M529 118h14"/>
<path d="M572 104h9M572 110h9M572 116h9"/>
</g>
<g fill="#2b6fb0"><circle cx="435" cy="74" r="1.600"/><circle cx="435" cy="81" r="1.600"/><circle cx="435" cy="88" r="1.600"/><path d="M556 80l5-3v6zM595 80l-5-3v6z"/></g>
<path stroke="#2b6fb0" d="M473 72v5M473 79v5M473 86v4M514 72v4M514 79v3M518 86v2M534 102v20M567 103v18M564 106l3-3 3 3M564 118l3 3 3-3"/>
<path stroke="#555" d="M528 102h15v20h-15z"/>
<text x="609" y="89" font-family="Liberation Sans" font-size="14" font-weight="700" fill="#333">A</text><path stroke="#2b6fb0" d="M609 74h18M612 71l-3 3 3 3M624 71l3 3-3 3"/>
<text x="656" y="79" font-family="Liberation Sans" font-size="9" fill="#2b6fb0">A</text><text x="656" y="89" font-family="Liberation Sans" font-size="9" fill="#8040a0">Z</text><path stroke="#555" d="M669 73v15M666 85l3 3 3-3"/>
<path stroke="#555" d="M690 86h6V73M693 76l3-3 3 3M701 73v10M698 85l-7 0" stroke-width="1.100"/>
<path d="M606 104h10l3 8-6 6-8-6z" stroke="#777"/><rect x="604" y="117" width="16" height="4" fill="#ddd" stroke="#999"/>
<rect x="644" y="104" width="13" height="15" stroke="#888" stroke-dasharray="1.500 1.500"/><path stroke="#888" stroke-dasharray="1.500 1.500" d="M650 104v15M644 111h13"/>
<!-- edit group -->
<circle cx="1642" cy="70" r="5" stroke="#2b6fb0" stroke-width="2"/><path d="M1639 74l-4 5" stroke="#2b6fb0" stroke-width="2.500"/>
<text x="1636" y="95" font-family="Liberation Sans" font-size="9" fill="#2b6fb0">ab</text><text x="1636" y="104" font-family="Liberation Sans" font-size="9" fill="#2b6fb0">ac</text>
<path d="M1640 112v14l3-3 3 4 2-1-2-4h4z" stroke="#666"/>
<circle cx="1745" cy="80" r="5" fill="#f5960f"/><ellipse cx="1745" cy="80" rx="4" ry="7" fill="#f5a526"/>
<path d="M1596 89h6" stroke="#555"/>
<!-- page setup icons -->
<g stroke="#777" stroke-width="1.100">
<path d="M1893 66v28M1897 66v28M1901 66v28M1905 66v28M1909 66v28M1891 92l2 3 2-3M1895 92l2 3 2-3M1899 92l2 3 2-3M1903 92l2 3 2-3M1907 92l2 3 2-3"/>
<rect x="1944.500" y="68" width="22" height="27" fill="#fff"/>
<path d="M1990 67h12l5 5v20h-17zM2002 67v5h5" fill="#fff"/><rect x="1997" y="78" width="19" height="17" fill="#fff"/>
<rect x="2048.500" y="70" width="19" height="24" fill="#fff"/>
<rect x="2092.500" y="68" width="22" height="27" fill="#fff"/>
<rect x="2133" y="65" width="10" height="7"/><rect x="2133" y="76" width="10" height="7"/>
<rect x="2136" y="90" width="8" height="11" fill="#fff"/>
<rect x="2228.500" y="67" width="22" height="29" fill="#fff"/>
</g>
<text x="1909" y="82" font-family="Liberation Sans" font-size="19" fill="#2b6fb0">A</text>
<path stroke="#2b6fb0" d="M1950 68v27M1961 68v27M1944 75h22M1944 89h22M2012 66a6 6 0 0 1 2 8M2011 71l3 3 2-4M2044 70v24M2042 70h4M2042 94h4M2048 66h19M2048 64v4M2067 64v4M2096 78h15M2096 82h15M2096 86h15M2096 74h15M2127 71v-5M2127 76h5M2132 71h1M2128 91v3M2128 96v3M2128 100v3"/>
<path fill="#8fa8c8" d="M2232 76h15v14h-15z" opacity=".7"/><path stroke="#3a6ea8" d="M2228 67v29" stroke-width="2"/>
<text x="2134" y="121" font-family="Liberation Sans" font-size="12" fill="#555">bc</text><text x="2139" y="112" font-family="Liberation Sans" font-size="8" fill="#555">a-</text>
<!-- indent glyphs -->
<g stroke="#666"><path d="M2290 89h8M2290 95h8M2290 101h8M2280 112h8M2280 118h8M2406 90h8M2406 95h8M2406 100h8M2406 114h8M2406 118h8M2406 123h8"/></g>
<g stroke="#2b6fb0"><path d="M2280 95h7M2284 92l3 3-3 3M2296 118h-6M2293 115l-3 3 3 3M2404 87v16M2402 89l2-2 2 2M2402 101l2 2 2-2M2404 111v15M2402 113l2-2 2 2M2402 124l2 2 2-2"/></g>
<path stroke="#666" d="M2390 92l2-2 2 2M2390 100l2 2 2-2M2390 116l2-2 2 2M2390 124l2 2 2-2M2524 92l2-2 2 2M2524 100l2 2 2-2M2524 116l2-2 2 2M2524 124l2 2 2-2"/>
<!-- arrange -->
<g stroke="#c4c4c4" stroke-width="1.100">
<rect x="2556" y="67" width="20" height="27" fill="#f3f3f3"/><path d="M2559 86h14M2559 90h14M2560 83l3-5 3 3 2-2 3 4z"/>
<path d="M2599 67h12l6 6v22h-18zM2602 78h12M2602 90h12"/><path d="M2606 85a4 4 0 0 1 6 0"/>
<rect x="2653" y="80" width="15" height="15" fill="#f3f3f3"/>
<rect x="2708" y="80" width="15" height="15" fill="#f3f3f3"/>
<rect x="2795" y="90" width="13" height="9" stroke-dasharray="2 2"/>
<path d="M2797 118l6-7v7z"/>
</g>
<rect x="2643" y="67" width="20" height="21" fill="#ddd9dd"/><rect x="2696" y="67" width="20" height="21" fill="#ddd9dd"/>
<g stroke="#666" stroke-width="1.100"><rect x="2749" y="67" width="12" height="12"/><rect x="2749" y="81" width="12" height="12"/><path d="M2796 67v14M2800 70h8"/></g>
<rect x="2754" y="74" width="14" height="14" fill="#efc97e"/><path d="M2767 82v14l3-2 2 4 2-1-2-4h3z" fill="#fff" stroke="#666"/>
<rect x="2800" y="70" width="8" height="7" fill="#efc97e"/><path d="M2803 78h-4l2-2M2799 78l2 2" stroke="#2b6fb0"/>
<!-- indent markers -->
<g fill="#fff" stroke="#777">
<path d="M545 157h10v4l-5 6-5-6z"/><path d="M545 177l5-6 5 6v0h-10z"/><rect x="545" y="177" width="10" height="6"/>
<path d="M1741 176l5-6 5 6v2h-10z"/>
<path d="M2844 157h10v4l-5 6-5-6z"/><path d="M2844 177l5-6 5 6h-10z"/><rect x="2844" y="177" width="10" height="6"/>
<path d="M2918 172l5-5 5 5v5h-10z"/>
</g>
<!-- search in nav -->
<circle cx="266" cy="220" r="5" stroke="#2b6fb0" stroke-width="2"/><path d="M263 224l-4 5" stroke="#2b6fb0" stroke-width="2.500"/><path d="M276 222l2 2 2-2" stroke="#666"/>
<!-- nav arrows -->
<path fill="none" stroke="#8a8a8a" d="M6 507l5 4-5 4zM6 654l5 4-5 4zM6 696l5 4-5 4zM6 759l5 4-5 4zM6 801l5 4-5 4zM6 822l5 4-5 4zM6 843l5 4-5 4zM6 864l5 4-5 4zM6 885l5 4-5 4zM6 906l5 4-5 4zM6 927l5 4-5 4zM6 948l5 4-5 4zM6 969l5 4-5 4z"/>
<!-- status icons -->
<g stroke="#666"><path d="M190 1018h9v11h-9zM199 1020l4-2M199 1024l4 4M203 1024l-4 4"/><path d="M2079 1018h8v11h-8zM2087 1020l4-2M2087 1024l4 4M2091 1024l-4 4"/>
<path d="M1719 1019h5l1 1 1-1h5v12h-5l-1 2-1-2h-5z"/><path d="M1758 1018h14v14h-14zM1760 1021h10M1760 1024h10M1760 1027h10"/><path d="M1798 1018h9v13h-9zM1800 1021h5M1800 1024h5"/><circle cx="1807" cy="1029" r="3.500"/>
<path d="M3638 1019h5l1 1 1-1h5v12h-5l-1 2-1-2h-5z"/><path d="M3678 1018h14v14h-14zM3680 1021h10M3680 1024h10M3680 1027h10"/><path d="M3718 1018h9v13h-9zM3720 1021h5M3720 1024h5"/><circle cx="3727" cy="1029" r="3.500"/>
<path d="M418 1018a6 6 0 0 0 0 10M422 1024l6 6M428 1024l-6 6M2310 1018a6 6 0 0 0 0 10M2314 1024l6 6M2320 1024l-6 6"/></g>
</svg>
</body></html>
